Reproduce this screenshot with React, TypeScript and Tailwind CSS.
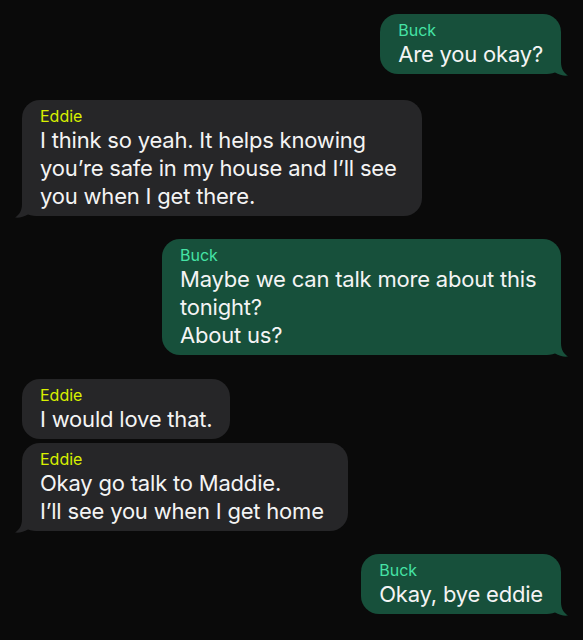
import React from 'react';

type Msg = {
  from: 'Buck' | 'Eddie';
  lines: string[];
  width?: string;
  tail: boolean;
  gap: string;
};

const MESSAGES: Msg[] = [
  { from: 'Buck', lines: ['Are you okay?'], tail: true, gap: 'mt-[14px]' },
  {
    from: 'Eddie',
    lines: ['I think so yeah. It helps knowing', 'you’re safe in my house and I’ll see', 'you when I get there.'],
    width: 'w-[400px]',
    tail: true,
    gap: 'mt-[26px]',
  },
  {
    from: 'Buck',
    lines: ['Maybe we can talk more about this', 'tonight?', 'About us?'],
    width: 'w-[399px]',
    tail: true,
    gap: 'mt-[23px]',
  },
  { from: 'Eddie', lines: ['I would love that.'], tail: false, gap: 'mt-[24px]' },
  {
    from: 'Eddie',
    lines: ['Okay go talk to Maddie.', 'I’ll see you when I get home'],
    width: 'w-[326px]',
    tail: true,
    gap: 'mt-[4px]',
  },
  { from: 'Buck', lines: ['Okay, bye eddie'], tail: true, gap: 'mt-[23px]' },
];

// iMessage style tail, drawn for the right side; mirrored for the left
function Tail({ side, color }: { side: 'left' | 'right'; color: string }) {
  return (
    <svg
      width="26"
      height="26"
      viewBox="0 0 26 26"
      className={`absolute bottom-[-2px] ${side === 'right' ? 'right-[-8px]' : 'left-[-8px] -scale-x-100'}`}
    >
      <path
        d="M0 24 L0 0 L18 0 L18 12 C18 19 21 23 25 25.5 C21 26 16 25 12 22.5 C9 24 5 24 0 24 Z"
        fill={color}
      />
    </svg>
  );
}

function Bubble({ msg }: { msg: Msg }) {
  const isBuck = msg.from === 'Buck';
  const bg = isBuck ? '#17503b' : '#262628';
  return (
    <div
      className={`relative ${msg.gap} ${isBuck ? 'self-end bg-[#17503b]' : 'self-start bg-[#262628]'} ${
        msg.width ?? 'w-fit'
      } rounded-[18px] px-[18px] pt-[7px] pb-[6px]`}
    >
      {msg.tail && <Tail side={isBuck ? 'right' : 'left'} color={bg} />}
      <div className={`relative text-[16px] leading-[19px] ${isBuck ? 'text-[#45e3a5]' : 'text-[#d8f000]'}`}>
        {msg.from}
      </div>
      <div className="relative text-[22px] leading-[28px] tracking-[-0.2px] text-[#f4f4f4] whitespace-nowrap">
        {msg.lines.map((l, i) => (
          <div key={i}>{l}</div>
        ))}
      </div>
    </div>
  );
}

export default function App() {
  return (
    <div
      className="min-h-screen bg-[#0a0a0a] px-[22px] flex flex-col"
      style={{ fontFamily: 'Inter, "Noto Sans", sans-serif' }}
    >
      {MESSAGES.map((m, i) => (
        <Bubble key={i} msg={m} />
      ))}
    </div>
  );
}
